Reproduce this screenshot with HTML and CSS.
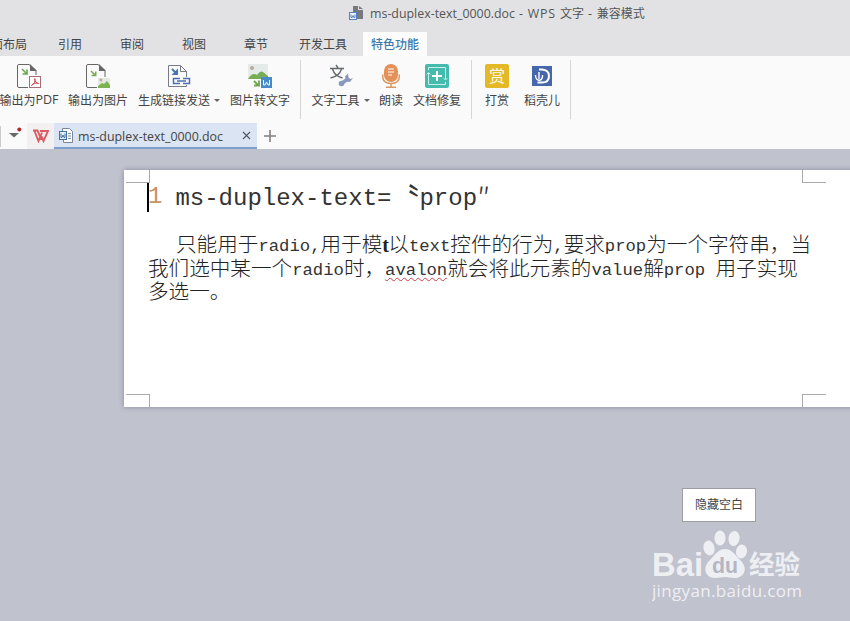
FILE: index.html
```
<!DOCTYPE html>
<html lang="zh-CN">
<head>
<meta charset="utf-8">
<title>ms-duplex-text_0000.doc - WPS 文字</title>
<link rel="stylesheet" href="styles.css">
</head>
<body>
<header class="title">
  <svg width="15" height="15" viewBox="0 0 15 15"><path d="M4 0h5v4h5v9H8V6H4z" fill="#77797d"/><path d="M10 0l4 3h-4z" fill="#77797d"/><rect x=".5" y="6.500" width="7" height="7" fill="#eef3fb" stroke="#5583c2"/><path d="M2 8.500v3h1.200l.8-2 .8 2H6v-3" fill="none" stroke="#5583c2"/></svg>
  <span class="title-text"><span class="en">ms-duplex-text_0000.doc</span><span class="en wide"> - WPS </span>文字<span class="en wide"> - </span>兼容模式</span>
</header>
<nav class="tabs">
  <span class="tab t-layout">面布局</span><span class="tab">引用</span><span class="tab">审阅</span><span class="tab">视图</span><span class="tab">章节</span><span class="tab t-dev">开发工具</span><span class="tab active">特色功能</span>
</nav>
<section class="ribbon">
  <div class="tool w60">
    <svg width="24" height="24" viewBox="0 0 24 24"><path d="M11 23.500H2q-1.500 0-1.500-1.500V2Q.5.500 2 .500h10l7 6V11" fill="none" stroke="#666"/><path d="M13 0l7 7h-7z" fill="#666"/><path d="M5 5l4.500 4.500M10 5.500v4.500H5.500" fill="none" stroke="#6aa84f" stroke-width="1.600"/><rect x="12.500" y="12.500" width="11" height="11" fill="#fff" stroke="#a86d72"/><path d="M17.800 14.500c.8 3-1 6-3.300 7 1-2 4-3 7-2-2 0-3.500-2-3.700-5z" fill="none" stroke="#c9434c"/></svg>
    <span class="label">输出为<span class="en pdf">PDF</span></span>
  </div>
  <div class="tool w60">
    <svg width="24" height="24" viewBox="0 0 24 24"><path d="M11 23.500H2q-1.500 0-1.500-1.500V2Q.5.500 2 .500h10l7 6V13" fill="none" stroke="#666"/><path d="M13 0l7 7h-7z" fill="#666"/><path d="M5 7l4 4M9.700 7.500v4H5.500" fill="none" stroke="#7cab58" stroke-width="1.600"/><rect x="12" y="14" width="12" height="10" fill="#e4e9e2"/><circle cx="15" cy="16" r="1.400" fill="#b9a9a0"/><path d="M12 24v-2l4-3 2 1 3-3 3 4v3z" fill="#7cb352"/></svg>
    <span class="label">输出为图片</span>
  </div>
  <div class="tool w82">
    <svg width="24" height="24" viewBox="0 0 24 24"><path d="M5 22.500H1.500V1.500h12l6 6V13M4 22.500h15.500V21" fill="none" stroke="#777b85"/><path d="M13.500 1.500v6h6" fill="none" stroke="#777b85"/><path d="M5 5l5 5" stroke="#4b74b5" stroke-width="2"/><path d="M11 4.500V11H4.500z" fill="#4b74b5"/><path d="M13 14.500H6.500v5H13M16 14.500h6.500v5H16M10 17h9" fill="none" stroke="#4b6fae" stroke-width="1.500"/></svg>
    <span class="label">生成链接发送<i class="caret"></i></span>
  </div>
  <div class="tool w60">
    <svg width="24" height="24" viewBox="0 0 24 24"><rect width="20" height="15" fill="#e6ebe9"/><circle cx="4" cy="4" r="2" fill="#b9a8a0"/><path d="M0 15q3-5 6-5 2 0 3 1 3-5 6-3l5 4v3z" fill="#77ad57"/><path d="M6 17l4 4M11 16.500v5H6" fill="none" stroke="#6ca750" stroke-width="1.800"/><rect x="13" y="13" width="11" height="11" fill="#468ac7"/><path d="M15.500 16v5h1.500l1.500-3 1.500 3h1.500v-5" fill="none" stroke="#fff"/></svg>
    <span class="label">图片转文字</span>
  </div>
  <i class="sep"></i>
  <div class="tool w59">
    <svg width="24" height="24" viewBox="0 0 24 24"><path d="M1 4.500h14M7 1l2 3M3.500 5q2 7 10 9M12.500 5q-2 7-11 9" fill="none" stroke="#666a70" stroke-width="1.400"/><path d="M12.500 19.500l7-5" stroke="#8998bf" stroke-width="3.500"/><path d="M19 9.500l-3 3 1 5 4 .5 3-4-2.500 1-2-1.500z" fill="#8998bf"/><circle cx="12.500" cy="19.500" r="2.800" fill="#8998bf"/></svg>
    <span class="label">文字工具<i class="caret"></i></span>
  </div>
  <div class="tool w24 g9">
    <svg width="24" height="24" viewBox="0 0 24 24"><rect x="5" y="0" width="14" height="18" rx="7" fill="#e39158"/><path d="M9 5h6M9 8h6M9 11h4" stroke="#fff" stroke-width="1.200"/><path d="M3.700 10.500v2q0 7 8.300 7t8.300-7v-2M12 19v4M7 23.300h10" fill="none" stroke="#dc965f" stroke-width="1.500"/></svg>
    <span class="label">朗读</span>
  </div>
  <div class="tool w48">
    <svg width="24" height="24" viewBox="0 0 24 24"><rect width="24" height="24" rx="2" fill="#45bbae"/><path d="M7 3.500h13.500V15M17 20.500H3.500V9M3.500 6V3.500H7M20.500 18v2.500H17M1.500 10.500l2-2 2 2M18.500 14l2 2 2-2" fill="none" stroke="#c9f2ec"/><path d="M12 7v10M7 12h10" stroke="#fff" stroke-width="2"/></svg>
    <span class="label">文档修复</span>
  </div>
  <i class="sep"></i>
  <div class="tool w24 g13">
    <span class="reward">赏</span>
    <span class="label">打赏</span>
  </div>
  <div class="tool w36 g15">
    <svg width="24" height="24" viewBox="0 0 24 24"><rect x="2" y="2" width="20" height="20" fill="#4767ad"/><path d="M9 5.500h3q7 .5 7 6.500 0 6.500-7 6.500H7.500" fill="none" stroke="#fff" stroke-width="2"/><path d="M5.500 11q0 5 4 5.500Q13 15 12.500 11M9 8v7" fill="none" stroke="#fff" stroke-width="1.400"/></svg>
    <span class="label">稻壳儿</span>
  </div>
  <i class="sep"></i>
</section>
<section class="files">
  <i class="edge"></i>
  <svg class="drop" width="13" height="14" viewBox="0 0 13 14"><path d="M0 6h10l-5 4.500z" fill="#68696c"/><circle cx="10.300" cy="2.500" r="2" fill="#b3262e"/></svg>
  <span class="home"><svg width="16" height="14" viewBox="0 0 16 14"><path d="M0 1.500h4.500L8.500 11M1.500 2l4 10L9 3.500M7 2h8l-4.500 10L7.500 5" fill="none" stroke="#db5a61" stroke-width="1.900"/></svg></span>
  <div class="file">
    <svg width="14" height="15" viewBox="0 0 14 15"><path d="M3.500 3V.500h7l3 3v11h-9V12" fill="#fff" stroke="#77869b"/><path d="M9 5.500h3M9 8h3M9 10.500h3" stroke="#77869b"/><rect x=".5" y="3.500" width="7" height="8" fill="#e9f1fb" stroke="#416fa9"/><path d="M2 5.500v4h1l1-2.500 1 2.500h1v-4" fill="none" stroke="#416fa9"/></svg>
    <span class="file-name en">ms-duplex-text_0000.doc</span>
    <svg width="9" height="9" viewBox="0 0 9 9"><path d="M1 1l7 7M8 1L1 8" stroke="#4d5665" stroke-width="1.100"/></svg>
  </div>
  <svg class="plus" width="12" height="12" viewBox="0 0 12 12"><path d="M6 0v12M0 6h12" stroke="#808080" stroke-width="1.600"/></svg>
</section>
<main class="canvas">
  <article class="page">
    <i class="mark tl"></i><i class="mark tr"></i><i class="mark bl"></i><i class="mark br"></i>
    <h1 class="heading"><span class="num">1</span><span class="word"> ms-duplex-text=</span><span class="open">〝</span><span class="word">prop</span><span class="close">″</span></h1>
    <div class="line first">只能用于<span class="mono">radio,</span>用于模<b>t</b>以<span class="mono">text</span>控件的行为<span class="mono">,</span>要求<span class="mono">prop</span>为一个字符串，当</div>
    <div class="line">我们选中某一个<span class="mono">radio</span>时，<span class="mono wavy">avalon</span>就会将此元素的<span class="mono">value</span>解<span class="mono">prop </span>用子实现</div>
    <div class="line">多选一。</div>
  </article>
  <div class="tip">隐藏空白</div>
  <svg class="logo" width="156" height="76" viewBox="0 0 156 76">
    <g fill="#eeeff3">
      <text class="brand" x="0" y="47" textLength="51" lengthAdjust="spacingAndGlyphs">Bai</text>
      <ellipse cx="57" cy="19" rx="5.500" ry="7.500" transform="rotate(-12 57 19)"/>
      <ellipse cx="68" cy="9" rx="5.500" ry="7.500"/>
      <ellipse cx="82" cy="9.500" rx="5.500" ry="7.500" transform="rotate(10 82 9.500)"/>
      <ellipse cx="89.500" cy="22.500" rx="5.500" ry="7" transform="rotate(12 89.500 22.500)"/>
      <path d="M73 20c7 0 10 6 15 11 9 8 4 18-5 18-4 0-7-1-10-1s-6 1-10 1c-10 0-13-11-5-18 5-5 8-11 15-11z"/>
      <text class="cn" x="97" y="45" textLength="51" lengthAdjust="spacingAndGlyphs">经验</text>
      <text class="url" x="0" y="68" textLength="150">jingyan.baidu.com</text>
    </g>
    <text class="du" x="60" y="44" textLength="26" lengthAdjust="spacingAndGlyphs">du</text>
  </svg>
</main>
</body>
</html>
```
FILE: styles.css
```
* { box-sizing: border-box; }
body {
  margin: 0; width: 850px; height: 621px; overflow: hidden;
  display: flex; flex-direction: column;
  background: #c0c2ce; color: #444;
  font: 12px/16px "Noto Sans CJK SC", sans-serif;
}
svg { display: block; flex: none; }
.en { font-family: "Open Sans", "Noto Sans CJK SC", sans-serif; }
.title { height: 32px; background: #e2e2e4; display: flex; align-items: flex-start; gap: 6px; padding: 6px 0 0 349px; color: #555; }
.title-text { white-space: pre; margin-top: -1px; }
.title .en { font-size: 12.400px; }
.title .wide { letter-spacing: .8px; }
.tabs { height: 24px; background: #e2e2e4; display: flex; white-space: nowrap; line-height: 24px; }
.tab { flex: none; margin-right: 38px; }
.t-layout { margin-left: -9px; margin-right: 31px; }
.t-dev { margin-left: -7px; margin-right: 16px; }
.active { width: 64px; text-align: center; background: #fcfcfc; color: #4079aa; font-weight: 500; margin-right: 0; }
.ribbon { height: 67px; background: #fafafa; display: flex; gap: 10px; padding: 8px 0 0; }
.tool { flex: none; display: flex; flex-direction: column; align-items: center; gap: 4px; white-space: nowrap; }
.tool:first-child { margin-left: -1px; margin-right: -1px; }
.w24 { width: 24px; } .w36 { width: 36px; } .w48 { width: 48px; }
.w59 { width: 59px; } .w60 { width: 60px; } .w82 { width: 82px; }
.g9 { margin-left: -1px; } .g13 { margin-left: 3px; } .g15 { margin-left: 5px; }
.label { display: flex; align-items: center; }
.pdf { font-size: 12.500px; }
.caret { border: 3px solid transparent; border-top: 3px solid #666; border-bottom: 0; margin-left: 4px; }
.sep { flex: none; width: 1px; height: 59px; margin-top: -4px; background: #d6d6d6; }
.reward { width: 24px; height: 24px; border-radius: 2px; background: #e4b928; color: #fffbe6; font-size: 16px; line-height: 23px; text-align: center; }
.files { height: 26px; background: #fafafa; display: flex; align-items: center; }
.edge { width: 1px; height: 21px; background: #ccc; }
.drop { margin: -4px 5px 0 8px; }
.home { width: 27px; height: 26px; background: #f3f0f1; display: flex; align-items: center; justify-content: center; }
.file { width: 203px; height: 26px; background: #dae4f2; border-bottom: 2px solid #7f9fce; display: flex; align-items: center; padding: 0 6px 0 5px; gap: 5px; }
.file-name { flex: 1; font-size: 12.400px; white-space: nowrap; padding-top: 3px; }
.plus { margin-left: 7px; }
.canvas { flex: 1; position: relative; padding-top: 21px; }
.page { position: relative; width: 740px; height: 237px; margin-left: 124px; background: #fff; padding: 10px 0 0 24px; box-shadow: 0 0 5px #85879a; color: #222; }
.mark { position: absolute; width: 24px; height: 14px; border: 0 solid #a9a9ac; }
.tl { left: 2px; top: 0; height: 13px; border-width: 0 1px 1px 0; }
.tr { left: 678px; top: 0; height: 13px; border-width: 0 0 1px 1px; }
.bl { left: 2px; bottom: 0; height: 13px; border-width: 1px 1px 0 0; }
.br { left: 678px; bottom: 0; height: 13px; border-width: 1px 0 0 1px; }
.heading { margin: 0; height: 52px; font: 24px/34px "Liberation Mono", monospace; white-space: pre; display: flex; color: #333; }
.word { margin-top: 2px; }
.num { color: #c79265; width: 14px; height: 30px; margin: 2px 0 0 -1px; line-height: 30px; border-left: 2px solid #000; text-indent: -1px; }
.open { width: 28px; font: 32px/34px "Noto Sans CJK SC", sans-serif; text-indent: -4px; }
.close { font: 32px/34px "Noto Sans CJK SC", sans-serif; font-weight: 300; }
.line { height: 23.500px; line-height: 23.500px; font-size: 20.600px; font-weight: 300; white-space: pre; }
.first { padding-left: 28px; }
.line b { display: inline-block; width: 6px; font: bold 20px/20px "Liberation Serif", serif; }
.mono { font-family: "Liberation Mono", monospace; font-size: 17.250px; color: #333; position: relative; top: -1px; }
.wavy { text-decoration: underline wavy #c8404a 1px; text-underline-offset: 2px; }
.tip { position: absolute; left: 682px; top: 339px; width: 74px; height: 34px; border: 1px solid #9c9da5; background: #fff; text-align: center; line-height: 30px; }
.logo { position: absolute; left: 652px; top: 380px; }
.brand { font: bold 33px "Liberation Sans", sans-serif; }
.cn { font: bold 26px "Noto Sans CJK SC", sans-serif; }
.url { font: 17px "Open Sans", sans-serif; }
.du { font: bold 22px "Liberation Sans", sans-serif; fill: #b4b6c2; }
```
